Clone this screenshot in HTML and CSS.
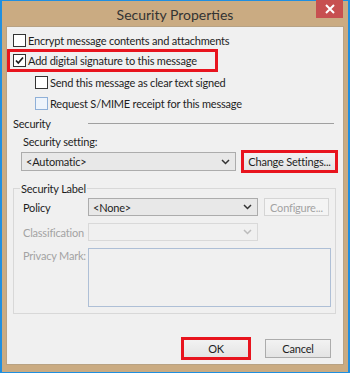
FILE: index.html
```html
<!DOCTYPE html>
<html lang="en">
<head>
    <meta charset="UTF-8">
    <title>Security Properties</title>
    <link rel="stylesheet" href="styles.css">
</head>
<body>
    <div class="window">
        <div class="titlebar">
            <span class="title">Security Properties</span>
            <button class="close" aria-label="Close">
                <svg width="10" height="10" viewBox="0 0 10 10"><path d="M1 1L9 9M9 1L1 9" stroke="#fff" stroke-width="2"/></svg>
            </button>
        </div>
        <div class="content">
            <div class="checks">
                <label class="check"><span class="box"></span>Encrypt message contents and attachments</label>
                <label class="check marked">
                    <span class="box">
                        <svg width="11" height="11" viewBox="0 0 11 11"><path d="M2 5.5L4.3 8L9 2.5" fill="none" stroke="#1a1a1a" stroke-width="1.7"/></svg>
                    </span>Add digital signature to this message</label>
                <label class="check sub"><span class="box"></span>Send this message as clear text signed</label>
                <label class="check sub"><span class="box soft"></span>Request S/MIME receipt for this message</label>
            </div>

            <div class="section-head">
                <span class="section-name">Security</span>
                <span class="rule"></span>
            </div>
            <div class="field-label">Security setting:</div>
            <div class="setting-row">
                <div class="combo wide">
                    <span>&lt;Automatic&gt;</span>
                    <svg class="chev" width="9" height="6" viewBox="0 0 9 6"><path d="M1 1L4.5 4.5L8 1" fill="none" stroke="#333" stroke-width="1.5"/></svg>
                </div>
                <button class="btn change marked-btn">Change Settings...</button>
            </div>

            <fieldset class="group">
                <legend>Security Label</legend>
                <div class="grow">
                    <span class="glabel">Policy</span>
                    <div class="combo narrow">
                        <span>&lt;None&gt;</span>
                        <svg class="chev" width="9" height="6" viewBox="0 0 9 6"><path d="M1 1L4.5 4.5L8 1" fill="none" stroke="#333" stroke-width="1.5"/></svg>
                    </div>
                    <button class="btn config" disabled>Configure...</button>
                </div>
                <div class="grow">
                    <span class="glabel dim">Classification</span>
                    <div class="combo narrow off">
                        <span></span>
                        <svg class="chev" width="9" height="6" viewBox="0 0 9 6"><path d="M1 1L4.5 4.5L8 1" fill="none" stroke="#bcbcbc" stroke-width="1.5"/></svg>
                    </div>
                </div>
                <div class="grow memo-row">
                    <span class="glabel dim">Privacy Mark:</span>
                    <div class="memo"></div>
                </div>
            </fieldset>

            <div class="actions">
                <button class="btn marked-btn">OK</button>
                <button class="btn">Cancel</button>
            </div>
        </div>
    </div>
</body>
</html>
```

FILE: styles.css
```css
body {
    margin: 0;
    width: 350px;
    height: 373px;
    overflow: hidden;
    background-color: #1f8fe0;
    font-family: Lato, "Noto Sans", sans-serif;
    font-size: 11px;
    letter-spacing: -0.2px;
    color: #1e1e1e;
    white-space: nowrap;
}
.window {
    margin: 1px 2px;
    height: 371px;
    box-sizing: border-box;
    padding: 0 5px 8px 5px;
    background-color: #caab82;
}
.titlebar {
    position: relative;
    height: 26px;
    display: flex;
    align-items: center;
    justify-content: center;
}
.title {
    font-size: 14px;
    letter-spacing: 0;
    color: #333;
}
.close {
    position: absolute;
    top: -1px;
    right: 0;
    width: 27px;
    height: 18px;
    padding: 0;
    border: none;
    background-color: #c75050;
    display: flex;
    align-items: center;
    justify-content: center;
}
.content {
    height: 337px;
    box-sizing: border-box;
    padding: 3px 7px 0 6px;
    background-color: #f0f0f0;
    box-shadow: 0 0 0 1px #b8a283;
}
.check {
    display: flex;
    align-items: center;
    gap: 2px;
    height: 21px;
}
.check.marked {
    height: 23px;
    width: 211px;
    box-sizing: border-box;
    margin: -2px 0 0 -6px;
    padding-left: 6px;
    outline: 3px solid #e8141e;
    outline-offset: -3px;
}
.check.sub {
    padding-left: 22px;
}
.box {
    width: 13px;
    height: 13px;
    box-sizing: border-box;
    border: 1px solid #333;
    background-color: #fff;
    display: flex;
    align-items: center;
    justify-content: center;
    flex-shrink: 0;
}
.box.soft {
    border-color: #8fb0d8;
    background-color: #eef4fb;
}
.section-head {
    display: flex;
    align-items: center;
    height: 18px;
}
.section-name {
    width: 75px;
}
.rule {
    flex: 1;
    margin-right: 2px;
    border-top: 1px solid #a0a0a0;
}
.field-label {
    height: 20px;
    line-height: 20px;
    margin-left: 10px;
}
.setting-row {
    display: flex;
    height: 19px;
    margin-left: 8px;
}
.combo {
    display: flex;
    align-items: center;
    justify-content: space-between;
    box-sizing: border-box;
    height: 100%;
    padding: 0 5px 0 4px;
    border: 1px solid #acacac;
    background-color: #e8e8e8;
}
.combo.wide {
    width: 215px;
}
.combo.narrow {
    width: 170px;
}
.combo.off {
    border-color: #d9d9d9;
    background-color: #f0f0f0;
}
.btn {
    height: 19px;
    width: 66px;
    padding: 0;
    font: inherit;
    letter-spacing: inherit;
    color: #1e1e1e;
    white-space: nowrap;
    border: 1px solid #acacac;
    background: linear-gradient(#f2f2f2, #e4e4e4);
}
.btn.change {
    width: 93px;
    margin-left: 7px;
}
.btn.config {
    width: 65px;
    height: 18px;
    margin-left: 6px;
    color: #a3a3a3;
    border-color: #d5d5d5;
    background: #f4f4f4;
}
.marked-btn {
    outline: 3px solid #e8141e;
    outline-offset: -1px;
}
.group {
    margin: 10px 0 0 0;
    min-width: 0;
    padding: 0 0 6px 6px;
    border: 1px solid #d8d8d8;
}
.group legend {
    padding: 0 1px;
    line-height: 15px;
}
.grow {
    display: flex;
    align-items: center;
    height: 18px;
    margin-top: 7px;
}
.grow:first-of-type {
    margin-top: 2px;
}
.glabel {
    width: 65px;
    margin-left: 3px;
    flex-shrink: 0;
}
.glabel.dim {
    color: #a3a3a3;
}
.memo-row {
    height: 59px;
    align-items: flex-start;
}
.memo-row .glabel {
    line-height: 15px;
}
.memo {
    width: 243px;
    height: 59px;
    box-sizing: border-box;
    border: 1px solid #aebfd6;
}
.actions {
    display: flex;
    justify-content: flex-end;
    gap: 16px;
    margin-top: 25px;
    padding-right: 5px;
}
```
